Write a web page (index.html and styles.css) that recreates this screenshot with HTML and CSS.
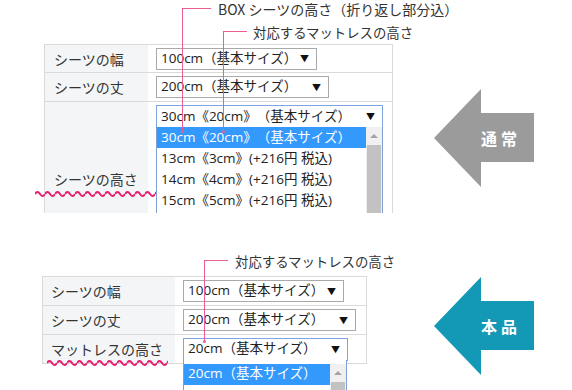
FILE: index.html
```html
<!DOCTYPE html>
<html lang="ja">
<head>
<meta charset="utf-8">
<title>シーツの高さ</title>
<link rel="stylesheet" href="styles.css">
</head>
<body>
<main class="page">
  <section class="panel panel-normal">
    <div class="figure">
      <div class="callout c1"><span class="ctext">BOX シーツの高さ（折り返し部分込）</span></div>
      <div class="callout c2"><span class="ctext">対応するマットレスの高さ</span></div>
      <div class="spec spec1">
        <div class="k">シーツの幅</div>
        <div class="v"><div class="sel w161"><span>100cm（基本サイズ）</span><i>▼</i></div></div>
        <div class="k">シーツの丈</div>
        <div class="v"><div class="sel w173"><span>200cm（基本サイズ）</span><i>▼</i></div></div>
        <div class="k k-tall"><span class="wavy">シーツの高さ</span></div>
        <div class="v v-top">
          <div class="sel w227 focus"><span>30cm《20cm》（基本サイズ）</span><i>▼</i>
            <div class="menu">
              <ul class="opts">
                <li class="on">30cm《20cm》（基本サイズ）</li>
                <li>13cm《3cm》(+216円 税込)</li>
                <li>14cm《4cm》(+216円 税込)</li>
                <li>15cm《5cm》(+216円 税込)</li>
              </ul>
              <div class="sbar"><b class="up"></b><b class="thumb"></b></div>
            </div>
          </div>
        </div>
      </div>
    </div>
    <div class="arrow arrow-gray">通常</div>
  </section>

  <section class="panel panel-this">
    <div class="figure">
      <div class="callout c3"><span class="ctext">対応するマットレスの高さ</span></div>
      <div class="spec spec2">
        <div class="k">シーツの幅</div>
        <div class="v"><div class="sel w161"><span>100cm（基本サイズ）</span><i>▼</i></div></div>
        <div class="k">シーツの丈</div>
        <div class="v"><div class="sel w173"><span>200cm（基本サイズ）</span><i>▼</i></div></div>
        <div class="k"><span class="wavy wavy2">マットレスの高さ</span></div>
        <div class="v">
          <div class="sel w165 focus tall"><span>20cm（基本サイズ）</span><i>▼</i>
            <div class="menu menu-small">
              <ul class="opts">
                <li class="on">20cm（基本サイズ）</li>
              </ul>
              <div class="sbar"><b class="up"></b><b class="thumb"></b></div>
            </div>
          </div>
        </div>
      </div>
    </div>
    <div class="arrow arrow-teal">本品</div>
  </section>
</main>
</body>
</html>
```
FILE: styles.css
```css
* { box-sizing: border-box; }
html, body { margin: 0; padding: 0; background: #fff; }
body {
  font-family: "Noto Sans CJK JP", "Noto Sans", sans-serif;
  color: #333;
  width: 572px;
  height: 390px;
  overflow: hidden;
  text-spacing-trim: space-all;
}
.page { display: flex; flex-direction: column; }

.panel { display: flex; overflow: hidden; position: relative; }
.panel-normal { height: 213px; }
.panel-this { height: 150px; margin-top: 27px; }

.figure { position: relative; width: 434px; flex: none; }
.panel-normal .spec { margin: 44px 0 0 44px; }
.panel-this .spec { margin: 36px 0 0 42px; }

/* spec table */
.spec {
  display: grid;
  border: 1px solid #dadada;
  width: max-content;
}
.spec1 { grid-template-columns: 103px 244px; border-bottom: none; }
.spec2 { grid-template-columns: 132px 191px; }
.spec > div { border-bottom: 1px solid #dadada; display: flex; align-items: center; }
.spec2 > div:nth-last-child(-n+2) { border-bottom: none; }
.k {
  background: #f3f5f7;
  padding-left: 9px;
  font-size: 14px;
  line-height: 1;
  white-space: nowrap;
}
.spec2 .k { padding-left: 8px; }
.v { padding-left: 8px; }
.spec1 > div:nth-child(1), .spec1 > div:nth-child(2) { height: 28px; }
.spec1 > div:nth-child(3), .spec1 > div:nth-child(4) { height: 29px; }
.spec1 .k-tall, .spec1 .v-top { height: 154px; }
.v-top { align-items: flex-start !important; padding-top: 3px; }
.spec2 > div:nth-child(1), .spec2 > div:nth-child(2) { height: 29px; }
.spec2 > div:nth-child(3), .spec2 > div:nth-child(4) { height: 29px; }
.spec2 > div:nth-child(5), .spec2 > div:nth-child(6) { height: 28px; }

/* wavy underline */
.wavy { position: relative; }
.wavy::after {
  content: "";
  position: absolute;
  left: -19px;
  right: -19px;
  top: 18px;
  height: 8px;
  background-image: url("data:image/svg+xml;utf8,<svg xmlns='http://www.w3.org/2000/svg' width='10' height='8'><path d='M0 4 Q2.5 0 5 4 T10 4' fill='none' stroke='%23e61f6f' stroke-width='2'/></svg>");
  background-repeat: repeat-x;
}
.wavy2::after { left: -4px; right: -5px; top: 17px; }

/* fake select */
.sel {
  position: relative;
  height: 22px;
  border: 1px solid #a9a9a9;
  background: #fff;
  display: flex;
  align-items: center;
  padding: 0 7px 0 4px;
  font-family: "Open Sans", "Noto Sans CJK JP", sans-serif;
  font-size: 13.5px;
  line-height: 1;
  white-space: nowrap;
  color: #222;
}
.sel.tall { height: 24px; }
.sel.focus { border-color: #7ea5e2; height: 23px; }
.sel i { font-style: normal; font-size: 9px; margin-left: auto; color: #111; }
.w161 { width: 161px; }
.w173 { width: 173px; }
.w227 { width: 227px; }
.w165 { width: 165px; }

/* open dropdown (overlay) */
.menu {
  position: absolute;
  left: -1px;
  right: -1px;
  top: 100%;
  border: 1px solid #7e9fd4;
  border-top: none;
  background: #fff;
  display: flex;
  z-index: 2;
  height: 130px;
}
.menu-small { padding-top: 4px; left: -1px; right: 0; }
.opts { list-style: none; margin: 0; padding: 0; flex: 1; }
.opts li {
  height: 21px;
  display: flex;
  align-items: center;
  padding-left: 4px;
  font-size: 13.5px;
  line-height: 1;
  white-space: nowrap;
  color: #222;
}
.opts li.on { background: #3399fd; color: #fff; }
.sbar { width: 16px; background: #f0f0f0; display: flex; flex-direction: column; }
.sbar .up { height: 18px; position: relative; }
.sbar .up::after {
  content: "";
  position: absolute;
  left: 4px; top: 7px;
  border-left: 4px solid transparent;
  border-right: 4px solid transparent;
  border-bottom: 4px solid #a3a3a3;
}
.sbar .thumb { flex: 1; background: #c2c2c2; margin: 0 1px; }

/* callouts */
.callout {
  position: absolute;
  border-left: 1px solid #ec5d93;
  border-top: 1px solid #ec5d93;
  z-index: 3;
}
.callout::after {
  content: "";
  position: absolute;
  left: -2px; bottom: -1px;
  width: 3px; height: 3px;
  border-radius: 50%;
  background: #ec5d93;
}
.ctext {
  position: absolute;
  left: calc(100% + 7px);
  top: -8px;
  font-size: 13.4px;
  line-height: 16px;
  white-space: nowrap;
  color: #333;
}
.c1 { left: 182px; top: 8px; width: 29px; height: 124px; }
.c1 .ctext { font-size: 14px; }
.c2 { left: 223px; top: 31px; width: 24px; height: 101px; }
.c2 .ctext { left: calc(100% + 6px); }
.c3 { left: 204px; top: 20px; width: 24px; height: 82px; }

/* arrows */
.arrow {
  width: 100px;
  height: 98px;
  flex: none;
  clip-path: polygon(0 49px, 47px 0, 47px 24px, 100px 24px, 100px 73px, 47px 73px, 47px 98px);
  display: flex;
  align-items: center;
  padding-left: 47px;
  color: #fff;
  font-weight: bold;
  font-size: 16px;
  letter-spacing: 4px;
  line-height: 1;
}
.arrow-gray { background: #9b9b9b; margin-top: 89px; }
.arrow-teal { background: #1399b5; margin-top: 37px; }
```
